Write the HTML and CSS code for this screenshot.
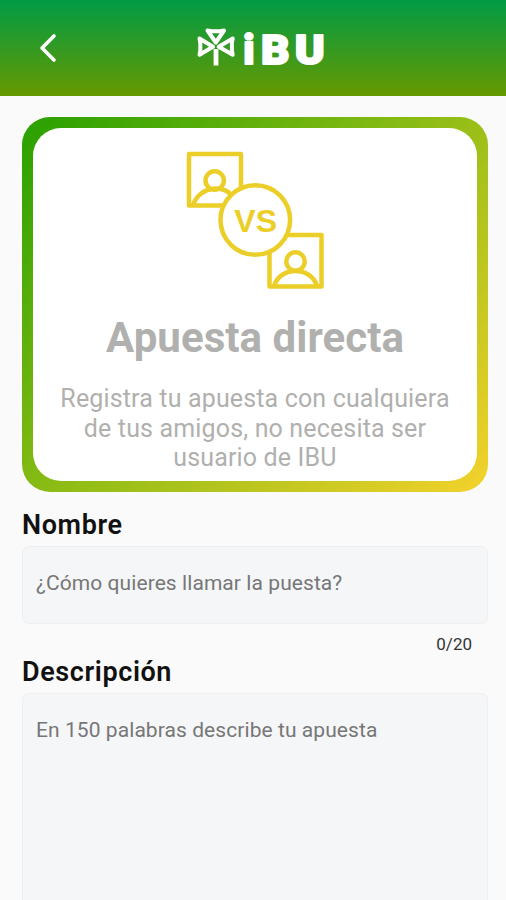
FILE: index.html
```html
<!DOCTYPE html>
<html lang="es">
<head>
<meta charset="utf-8">
<meta name="viewport" content="width=device-width">
<title>IBU</title>
<link rel="stylesheet" href="styles.css">
</head>
<body>
<header class="bar">
  <svg class="back" width="20" height="32" viewBox="0 0 20 32" aria-hidden="true"><path d="M16 4 4 16 16 28"/></svg>
  <svg class="logo" width="134" height="76" viewBox="196 10 134 76" aria-label="iBU">
    <g class="clover">
      <path d="M207.500 30.500L211.500 31.200H220L224 30.500L215.800 42.500Z"/>
      <path d="M199.500 38.500L200.300 43V50.500L199.500 54.800L213 46.700Z"/>
      <path d="M232.700 38.500L231.900 43V50.500L232.700 54.800L218.700 46.700Z"/>
      <path class="stem" d="M216 49v16.500"/>
    </g>
    <text class="brand" y="64"><tspan x="243.300">i</tspan><tspan x="261" textLength="28.500" lengthAdjust="spacingAndGlyphs">B</tspan><tspan x="294.700" textLength="30" lengthAdjust="spacingAndGlyphs">U</tspan></text>
  </svg>
</header>
<main class="content">
  <section class="card">
    <div class="panel">
      <svg class="versus" width="140" height="140" viewBox="185 150 140 140" aria-hidden="true">
        <path d="M189 154h52v51.500h-52Z"/>
        <circle cx="214.700" cy="180.500" r="9.200"/>
        <path d="M193 205.500C199 185 227 184 233 198"/>
        <path d="M269.500 235h52v51.500h-52Z"/>
        <circle cx="295.500" cy="261.500" r="9.200"/>
        <path d="M274 286C280 266 311 266 317 286"/>
        <circle class="disc" cx="255.300" cy="220" r="34.800"/>
        <text x="234.300" y="231.800">VS</text>
      </svg>
      <h1>Apuesta directa</h1>
      <p>Registra tu apuesta con cualquiera<br>de tus amigos, no necesita ser<br>usuario de IBU</p>
    </div>
  </section>
  <h2>Nombre</h2>
  <div class="field">¿Cómo quieres llamar la puesta?</div>
  <div class="count">0/20</div>
  <h2>Descripción</h2>
  <div class="field area">En 150 palabras describe tu apuesta</div>
</main>
</body>
</html>
```

FILE: styles.css
```css
* { box-sizing: border-box; }
html, body { margin: 0; height: 100%; overflow: hidden; }
body { background: #fafafa; font-family: Roboto, sans-serif; }
.bar {
  height: 96px;
  display: grid;
  grid-template-columns: 196px 134px 1fr;
  align-items: center;
  background: linear-gradient(#009b45, #669900);
}
.back { margin-left: 38px; fill: none; stroke: #fff; stroke-width: 3.6; stroke-linecap: round; stroke-linejoin: round; }
.logo { display: block; }
.clover { fill: none; stroke: #fff; stroke-width: 4; stroke-linejoin: round; }
.clover .stem { stroke-width: 4.8; }
.brand { fill: #fff; stroke: #fff; stroke-width: 2; stroke-linejoin: round; font: 900 41px Roboto, sans-serif; }
.content { padding: 21px 18px 0 22px; }
.card {
  width: 466px;
  height: 375px;
  padding: 11px;
  border-radius: 28px;
  background: linear-gradient(135deg, #27a000, #90bd16 50%, #f4d22b);
}
.panel {
  height: 353px;
  border-radius: 28px;
  background: #fff;
  display: flex;
  flex-direction: column;
  align-items: center;
  padding-top: 22px;
  color: #b0b0ae;
}
.versus { flex: none; fill: none; stroke: #ecce28; stroke-width: 4.5; stroke-linejoin: round; }
.versus .disc { fill: #fff; }
.versus text { fill: #ecce28; stroke: none; font: 700 32px "Liberation Sans", sans-serif; }
h1 { margin: 23px 0 0; font-size: 42px; line-height: 50px; font-weight: 700; letter-spacing: .05px; white-space: nowrap; }
p { margin: 21px 0 0; font-size: 25px; line-height: 29.5px; letter-spacing: .15px; text-align: center; white-space: nowrap; }
h2 { margin: 17px 0 0; font-size: 27px; line-height: 32px; font-weight: 600; letter-spacing: .6px; color: #111; }
.field {
  width: 466px;
  height: 78px;
  margin-top: 5px;
  padding: 22px 13px;
  border: 1px solid #eeeff1;
  border-radius: 7px;
  background: #f5f6f8;
  color: #777;
  font-size: 21px;
  line-height: 28px;
  letter-spacing: .07px;
}
.count { margin: 8px 16px 0 0; width: 450px; text-align: right; font-size: 17px; line-height: 24px; color: #333; }
.count + h2 { margin-top: 0; }
.area { height: 240px; }
```
